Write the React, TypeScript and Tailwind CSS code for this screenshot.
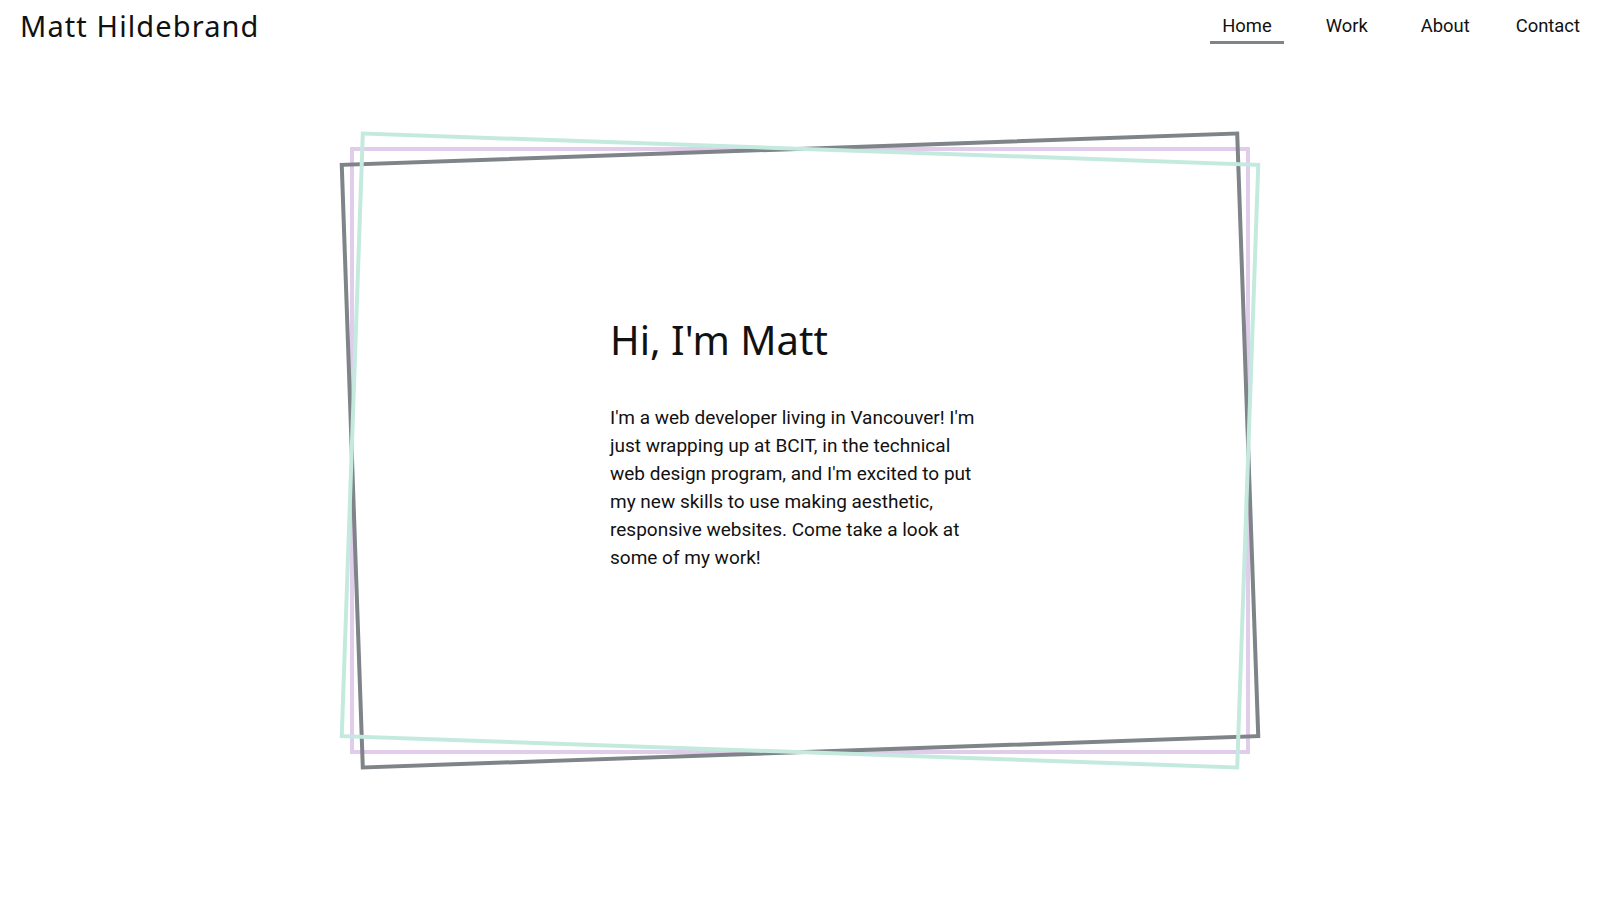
import React from 'react';

const links = [
  { label: 'Home', active: true, className: 'px-3' },
  { label: 'Work', active: false, className: 'ml-[30px] px-3' },
  { label: 'About', active: false, className: 'ml-[29px] px-3' },
  { label: 'Contact', active: false, className: 'ml-[22px] px-3' },
];

export default function App() {
  return (
    <div className="min-h-screen bg-white text-[#111]" style={{ fontFamily: 'Roboto, sans-serif' }}>
      {/* Header */}
      <header className="flex items-start justify-between pl-5 pr-2">
        <a
          href="#"
          className="pt-[6px] text-[29px] leading-[40px] tracking-[1.1px] text-[#111]"
          style={{ fontFamily: '"Noto Sans", sans-serif' }}
        >
          Matt Hildebrand
        </a>
        <nav className="flex pt-[15px]">
          {links.map((link) => (
            <a
              key={link.label}
              href="#"
              className={`${link.className} pb-[4px] text-[18.4px] leading-[22px] border-b-[3px] ${
                link.active ? 'border-[#7e8487]' : 'border-transparent'
              }`}
            >
              {link.label}
            </a>
          ))}
        </nav>
      </header>

      {/* Hero frame */}
      <main className="pt-[101px]">
        <div className="relative mx-auto w-[900px] h-[607px] border-4 border-[#e1cdeb]">
          <div className="absolute -inset-1 border-4 border-[#7e8487] -rotate-2" />
          <div className="absolute -inset-1 border-4 border-[#c4eadf] rotate-2" />

          <div className="relative flex h-full items-center justify-center pb-[14px] pr-[4px]">
            <div className="w-[376px]">
              <h1
                className="text-[40px] leading-[48px] text-[#111]"
                style={{ fontFamily: '"Noto Sans", sans-serif' }}
              >
                Hi, I'm Matt
              </h1>
              <p className="mt-[40px] text-[19px] leading-[28px]">
                I'm a web developer living in Vancouver! I'm just wrapping up at BCIT, in the technical web
                design program, and I'm excited to put my new skills to use making aesthetic, responsive
                websites. Come take a look at some of my work!
              </p>
            </div>
          </div>
        </div>
      </main>
    </div>
  );
}
